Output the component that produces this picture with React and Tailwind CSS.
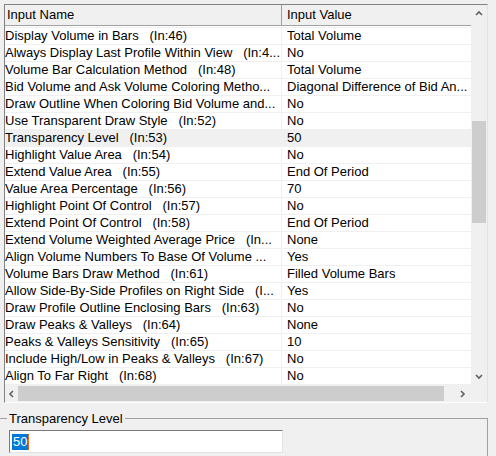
import React from 'react';

// names as the grid shows them (already clipped by the column width)
const rows = [
    ['Display Volume in Bars   (In:46)', 'Total Volume'],
    ['Always Display Last Profile Within View   (In:4...', 'No'],
    ['Volume Bar Calculation Method   (In:48)', 'Total Volume'],
    ['Bid Volume and Ask Volume Coloring Metho...', 'Diagonal Difference of Bid An...'],
    ['Draw Outline When Coloring Bid Volume and...', 'No'],
    ['Use Transparent Draw Style   (In:52)', 'No'],
    ['Transparency Level   (In:53)', '50'],
    ['Highlight Value Area   (In:54)', 'No'],
    ['Extend Value Area   (In:55)', 'End Of Period'],
    ['Value Area Percentage   (In:56)', '70'],
    ['Highlight Point Of Control   (In:57)', 'No'],
    ['Extend Point Of Control   (In:58)', 'End Of Period'],
    ['Extend Volume Weighted Average Price   (In...', 'None'],
    ['Align Volume Numbers To Base Of Volume ...', 'Yes'],
    ['Volume Bars Draw Method   (In:61)', 'Filled Volume Bars'],
    ['Allow Side-By-Side Profiles on Right Side   (I...', 'Yes'],
    ['Draw Profile Outline Enclosing Bars   (In:63)', 'No'],
    ['Draw Peaks & Valleys   (In:64)', 'None'],
    ['Peaks & Valleys Sensitivity   (In:65)', '10'],
    ['Include High/Low in Peaks & Valleys   (In:67)', 'No'],
    ['Align To Far Right   (In:68)', 'No'],
];

const SELECTED = 6;

function Arrow({ dir }) {
    // small windows 10 scrollbar chevrons
    const pts = {
        up: '1,5 4,2 7,5',
        down: '1,2 4,5 7,2',
        left: '5,1 2,4 5,7',
        right: '2,1 5,4 2,7',
    }[dir];
    return (
        <svg width="8" height="8" viewBox="0 0 8 8">
            <polyline points={pts} fill="none" stroke="#606060" strokeWidth="1.6" />
        </svg>
    );
}

export default function App() {
    return (
        <div className="w-[496px] h-[456px] bg-[#f0f0f0] overflow-hidden font-['Liberation_Sans',Arial,sans-serif] text-[13px] text-black">
            {/* grid */}
            <div className="ml-[4px] mt-[4px] w-[484px] h-[399px] border-t border-l border-[#828282] border-r border-r-[#e3e3e3] border-b border-b-white flex flex-col">
                <div className="flex h-[380px]">
                    <div className="w-[466px] flex flex-col bg-white">
                        <div className="h-[21px] flex bg-[#f0f0f0] border-b border-[#a0a0a0] leading-[20px]">
                            <div className="w-[277px] pl-[2px] border-r border-[#a0a0a0]">Input Name</div>
                            <div className="flex-1 pl-[5px]">Input Value</div>
                        </div>
                        <div className="h-px bg-white" />
                        {rows.map(([name, value], i) => (
                            <div
                                key={i}
                                className={`h-[17px] flex border-t border-[#f0f0f0] leading-[16px] ${i === SELECTED ? 'bg-[#f0f0f0]' : 'bg-white'}`}
                            >
                                <div className="w-[277px] border-r border-[#f0f0f0] overflow-hidden whitespace-pre">{name}</div>
                                <div className="flex-1 min-w-0 pl-[5px] overflow-hidden whitespace-pre">{value}</div>
                            </div>
                        ))}
                        <div className="h-px bg-[#f0f0f0]" />
                    </div>
                    <div className="w-[16px] flex flex-col bg-[#f0f0f0]">
                        <div className="h-[17px] flex items-center justify-center"><Arrow dir="up" /></div>
                        <div className="flex-1 pt-[99px]">
                            <div className="mx-[1px] h-[102px] bg-[#cdcdcd]" />
                        </div>
                        <div className="h-[17px] flex items-center justify-center"><Arrow dir="down" /></div>
                    </div>
                </div>
                <div className="flex h-[17px] bg-[#f0f0f0]">
                    <div className="w-[466px] flex items-stretch">
                        <div className="w-[13px] flex items-center justify-center"><Arrow dir="left" /></div>
                        <div className="w-[426px] my-[1px] bg-[#cdcdcd]" />
                        <div className="flex-1" />
                        <div className="w-[17px] flex items-center justify-center"><Arrow dir="right" /></div>
                    </div>
                    <div className="flex-1" />
                </div>
            </div>

            {/* group box */}
            <fieldset className="mt-[8px] w-[488px] h-[60px] border-t border-r border-[#a0a0a0]">
                <legend className="ml-[7px] px-[2px] leading-[15px]">Transparency Level</legend>
                <div className="ml-[9px] mt-[4px] w-[274px] h-[23px] bg-white border border-[#7a7a7a] border-r-[#e3e3e3] border-b-[#e3e3e3] flex items-center pl-[2px]">
                    <span className="bg-[#0078d7] text-white leading-[16px] px-px">50</span>
                    <span className="w-px h-[16px] bg-[#d86a1c]" />
                </div>
            </fieldset>
        </div>
    );
}
